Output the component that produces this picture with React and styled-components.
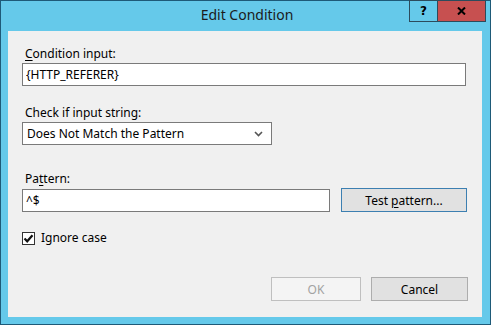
import styled, { createGlobalStyle } from "styled-components";

const GlobalStyle = createGlobalStyle`
  html, body {
    margin: 0;
    padding: 0;
    background: #ffffff;
  }
  * {
    box-sizing: border-box;
  }
`;

export default function App() {
  return (
    <>
      <GlobalStyle />
      <Window>
        <TitleBar>
          <span />
          <Title>Edit Condition</Title>
          <Caption>
            <CaptionButton>?</CaptionButton>
            <CaptionButton close>
              <svg width="9" height="8" viewBox="0 0 9 8">
                <path d="M1 0.5 L8 7.5 M8 0.5 L1 7.5" stroke="#000" strokeWidth="2" />
              </svg>
            </CaptionButton>
          </Caption>
        </TitleBar>
        <Client>
          <Label>
            <Key>C</Key>ondition input:
          </Label>
          <TextBox value="{HTTP_REFERER}" readOnly wide />

          <Label gap="19px">Check if input string:</Label>
          <Select>
            <span>Does Not Match the Pattern</span>
            <svg width="9" height="6" viewBox="0 0 9 6">
              <path d="M1 1 L4.5 4.5 L8 1" stroke="#555" strokeWidth="1.6" fill="none" />
            </svg>
          </Select>

          <Label gap="26px">
            Pa<Key>t</Key>tern:
          </Label>
          <PatternRow>
            <TextBox value="^$" readOnly />
            <Button primary>
              Test <Key>p</Key>attern...
            </Button>
          </PatternRow>

          <CheckRow>
            <CheckBox>
              <svg width="11" height="11" viewBox="0 0 11 11">
                <path d="M1.5 5.5 L4.2 8.3 L9.5 2.2" stroke="#111" strokeWidth="2.2" fill="none" />
              </svg>
            </CheckBox>
            Ignore case
          </CheckRow>

          <Footer>
            <Button disabled width="90px">OK</Button>
            <Button width="97px">Cancel</Button>
          </Footer>
        </Client>
      </Window>
    </>
  );
}

const Window = styled.div`
  width: 491px;
  height: 325px;
  display: flex;
  flex-direction: column;
  background: #65c9ea;
  border: 1px solid #1e5a78;
  padding: 0 8px 7px 7px;
  font-family: "Noto Sans", "Open Sans", sans-serif;
`;

const TitleBar = styled.div`
  height: 30px;
  display: grid;
  grid-template-columns: 1fr auto 1fr;
  align-items: start;
  margin: 0 -4px 0 -7px;
`;

const Title = styled.div`
  font-size: 14px;
  line-height: 28px;
  color: #1b1b1b;
  padding-left: 7px;
`;

const Caption = styled.div`
  justify-self: end;
  display: flex;
  margin-top: -1px;
`;

const CaptionButton = styled.div`
  width: ${(p) => (p.close ? "48px" : "29px")};
  height: 22px;
  display: flex;
  align-items: center;
  justify-content: center;
  background: ${(p) => (p.close ? "#c75050" : "#65c9ea")};
  border: 1px solid #2c4b5c;
  border-left-width: ${(p) => (p.close ? "0" : "1px")};
  font-family: "DejaVu Sans", sans-serif;
  font-weight: bold;
  font-size: 12px;
  color: #000;
`;

const Client = styled.div`
  flex: 1;
  display: flex;
  flex-direction: column;
  align-items: flex-start;
  background: #f0f0f0;
  padding: 15px 16px 0 14px;
  font-size: 12px;
  color: #000;
`;

const Label = styled.div`
  line-height: 16px;
  padding-left: 3px;
  margin-top: ${(p) => p.gap || "0"};
  margin-bottom: 1px;
`;

const Key = styled.span`
  text-decoration: underline;
  text-underline-offset: 2px;
`;

const TextBox = styled.input`
  width: ${(p) => (p.wide ? "444px" : "308px")};
  height: 23px;
  border: 1px solid #7a7a7a;
  background: #ffffff;
  font-family: inherit;
  font-size: 12px;
  padding: 0 3px;
  color: #000;
  outline: none;
`;

const Select = styled.div`
  width: 250px;
  height: 23px;
  display: flex;
  align-items: center;
  justify-content: space-between;
  border: 1px solid #7a7a7a;
  background: #ffffff;
  padding: 0 8px 0 4px;
`;

const PatternRow = styled.div`
  display: flex;
  align-items: center;
  gap: 11px;
`;

const Button = styled.button`
  width: ${(p) => p.width || "126px"};
  height: 24px;
  font-family: inherit;
  font-size: 12px;
  padding: 0;
  background: ${(p) => (p.disabled ? "#f4f4f4" : "#e1e1e1")};
  color: ${(p) => (p.disabled ? "#a2a2a2" : "#000")};
  border: 1px solid
    ${(p) => (p.primary ? "#3c7fb1" : p.disabled ? "#bfbfbf" : "#adadad")};
`;

const CheckRow = styled.div`
  display: flex;
  align-items: center;
  gap: 6px;
  margin-top: 18px;
  line-height: 16px;
`;

const CheckBox = styled.div`
  width: 13px;
  height: 13px;
  border: 1px solid #333333;
  background: #ffffff;
  display: flex;
  align-items: center;
  justify-content: center;
`;

const Footer = styled.div`
  align-self: flex-end;
  display: flex;
  gap: 10px;
  margin-top: 31px;
  margin-right: -2px;
`;
